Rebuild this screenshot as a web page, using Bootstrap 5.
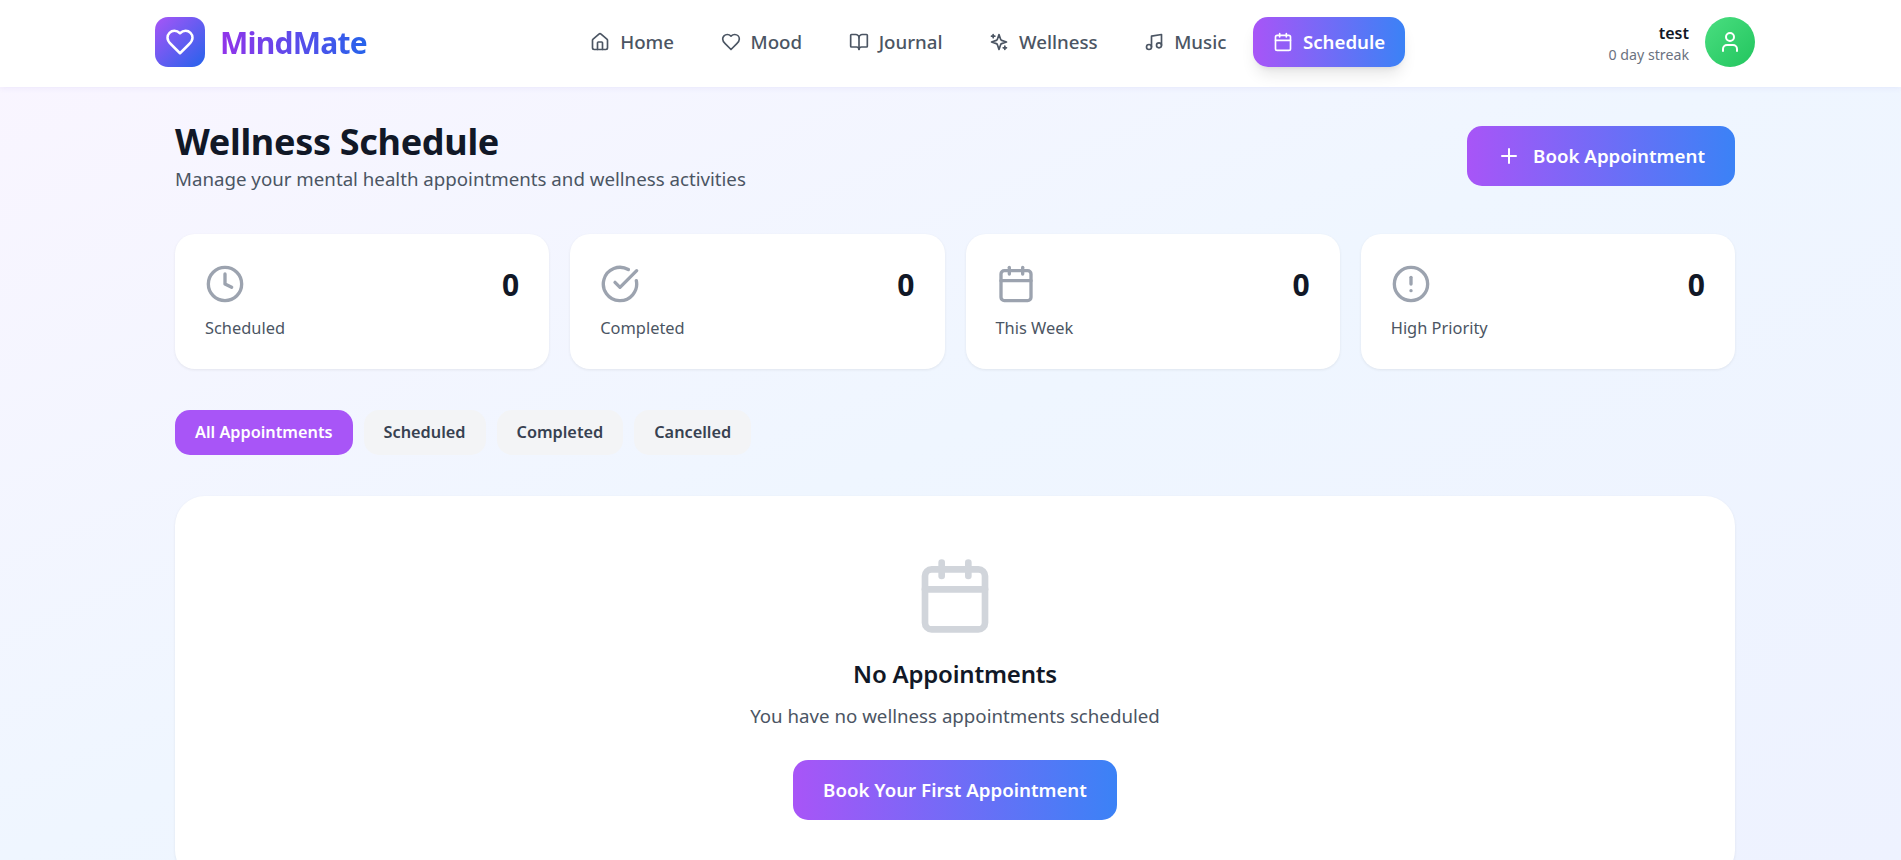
<!DOCTYPE html>
<html lang="en">
<head>
  <meta charset="UTF-8" />
  <meta name="viewport" content="width=device-width, initial-scale=1" />
  <title>MindMate - Wellness Schedule</title>
  <link href="https://cdn.jsdelivr.net/npm/bootstrap@5.3.0/dist/css/bootstrap.min.css" rel="stylesheet" />
  <style>
    html, body { height: 100%; overflow: hidden; }
    body {
      font-family: "Noto Sans", "Open Sans", sans-serif;
      background: linear-gradient(to bottom right, #faf5ff, #eff6ff, #eef2ff);
      color: #111827;
    }
    .ico { fill: none; stroke: currentColor; stroke-width: 2; stroke-linecap: round; stroke-linejoin: round; flex-shrink: 0; }
    .grad-btn { background: linear-gradient(90deg, #a855f7, #3b82f6); color: #fff; border: 0; }
    .grad-btn:hover { color: #fff; }

    .top-bar { height: 87px; background: #fff; box-shadow: 0 1px 6px rgba(88, 60, 200, .08); }
    .top-inner { width: 1600px; height: 84px; margin-left: 155px; }
    .logo-box { width: 50px; height: 50px; border-radius: 13px; background: linear-gradient(135deg, #a855f7, #2563eb); color: #fff; }
    .logo-text {
      font-size: 30px; font-weight: 700; letter-spacing: -.75px;
      background: linear-gradient(90deg, #9333ea, #2563eb);
      -webkit-background-clip: text; background-clip: text; color: transparent;
    }
    .logo-link { gap: 15px; }
    .menu-row { gap: 6.5px; }
    .menu-link { height: 50px; padding: 0 20px; gap: 10px; border-radius: 15px; font-size: 18.7px; font-weight: 500; color: #4b5563; text-decoration: none; }
    .menu-link.on { font-weight: 600; color: #fff; box-shadow: 0 10px 15px -3px rgba(0, 0, 0, .1), 0 4px 6px -4px rgba(0, 0, 0, .1); }
    .user-info { padding-top: 2px; }
    .user-name { font-size: 16px; font-weight: 600; line-height: 24px; }
    .user-streak { font-size: 14.2px; color: #6b7280; line-height: 20px; }
    .avatar { width: 50px; height: 50px; border-radius: 50%; background: linear-gradient(135deg, #4ade80, #22c55e); color: #fff; }

    .page-wrap { width: 1560px; margin-left: 175px; padding-top: 39px; }
    .page-title { font-size: 36px; font-weight: 700; line-height: 32px; letter-spacing: -.3px; margin: 0; }
    .page-sub { font-size: 18.7px; line-height: 28px; color: #4b5563; margin: 7px 0 0; }
    .big-btn { height: 60px; padding: 0 30px; border-radius: 15px; font-size: 18.7px; font-weight: 600; }
    .big-btn .ico { margin-right: 4px; }

    .stat-grid { display: grid; grid-template-columns: repeat(4, 1fr); gap: 21px; margin-top: 41px; }
    .stat-box { height: 135px; padding: 29px 30px; background: #fff; border-radius: 20px; box-shadow: 0 1px 3px rgba(0, 0, 0, .07); }
    .stat-num { font-size: 30px; font-weight: 700; line-height: 40px; padding-top: 2px; }
    .stat-label { margin-top: 11px; font-size: 16.4px; line-height: 24px; color: #4b5563; }
    .stat-ico { color: #9ca3af; }

    .tab-row { gap: 11px; margin-top: 41px; }
    .tab-btn { height: 45px; padding: 0 20px; border: 0; border-radius: 15px; font-size: 16.3px; font-weight: 600; background: #f3f4f6; color: #374151; }
    .tab-btn.on { background: #a855f7; color: #fff; }

    .empty-box { margin-top: 41px; padding: 60px; background: #fff; border-radius: 30px; box-shadow: 0 1px 3px rgba(0, 0, 0, .07); }
    .empty-ico { color: #d1d5db; }
    .empty-title { font-size: 24px; font-weight: 600; line-height: 32px; letter-spacing: -.2px; margin: 22px 0 0; }
    .empty-sub { font-size: 18.7px; line-height: 28px; color: #4b5563; margin: 12px 0 0; }
    .empty-box .big-btn { margin-top: 30px; }
  </style>
</head>
<body>
  <svg width="0" height="0" class="position-absolute">
    <symbol id="i-home" viewBox="0 0 24 24"><path d="M15 21v-8a1 1 0 0 0-1-1h-4a1 1 0 0 0-1 1v8"/><path d="M3 10a2 2 0 0 1 .709-1.528l7-5.999a2 2 0 0 1 2.582 0l7 5.999A2 2 0 0 1 21 10v9a2 2 0 0 1-2 2H5a2 2 0 0 1-2-2z"/></symbol>
    <symbol id="i-heart" viewBox="0 0 24 24"><path d="M19 14c1.49-1.46 3-3.21 3-5.5A5.5 5.5 0 0 0 16.5 3c-1.76 0-3 .5-4.5 2-1.5-1.5-2.74-2-4.5-2A5.5 5.5 0 0 0 2 8.5c0 2.3 1.5 4.05 3 5.5l7 7Z"/></symbol>
    <symbol id="i-book" viewBox="0 0 24 24"><path d="M12 7v14"/><path d="M3 18a1 1 0 0 1-1-1V4a1 1 0 0 1 1-1h5a4 4 0 0 1 4 4 4 4 0 0 1 4-4h5a1 1 0 0 1 1 1v13a1 1 0 0 1-1 1h-6a3 3 0 0 0-3 3 3 3 0 0 0-3-3z"/></symbol>
    <symbol id="i-spark" viewBox="0 0 24 24"><path d="m12 3-1.912 5.813a2 2 0 0 1-1.275 1.275L3 12l5.813 1.912a2 2 0 0 1 1.275 1.275L12 21l1.912-5.813a2 2 0 0 1 1.275-1.275L21 12l-5.813-1.912a2 2 0 0 1-1.275-1.275L12 3Z"/><path d="M5 3v4"/><path d="M19 17v4"/><path d="M3 5h4"/><path d="M17 19h4"/></symbol>
    <symbol id="i-music" viewBox="0 0 24 24"><path d="M9 18V5l12-2v13"/><circle cx="6" cy="18" r="3"/><circle cx="18" cy="16" r="3"/></symbol>
    <symbol id="i-cal" viewBox="0 0 24 24"><path d="M8 2v4"/><path d="M16 2v4"/><rect x="3" y="4" width="18" height="18" rx="2"/><path d="M3 10h18"/></symbol>
    <symbol id="i-user" viewBox="0 0 24 24"><path d="M19 21v-2a4 4 0 0 0-4-4H9a4 4 0 0 0-4 4v2"/><circle cx="12" cy="7" r="4"/></symbol>
    <symbol id="i-plus" viewBox="0 0 24 24"><path d="M5 12h14"/><path d="M12 5v14"/></symbol>
    <symbol id="i-clock" viewBox="0 0 24 24"><circle cx="12" cy="12" r="10"/><polyline points="12 6 12 12 16 14"/></symbol>
    <symbol id="i-check" viewBox="0 0 24 24"><path d="M21.801 10A10 10 0 1 1 17 3.335"/><path d="m9 11 3 3L22 4"/></symbol>
    <symbol id="i-alert" viewBox="0 0 24 24"><circle cx="12" cy="12" r="10"/><line x1="12" x2="12" y1="8" y2="12"/><line x1="12" x2="12.01" y1="16" y2="16"/></symbol>
  </svg>

  <nav class="top-bar">
    <div class="top-inner d-flex align-items-center justify-content-between">
      <a href="#" class="logo-link d-flex align-items-center text-decoration-none">
        <span class="logo-box d-flex align-items-center justify-content-center">
          <svg class="ico" width="30" height="30"><use href="#i-heart"/></svg>
        </span>
        <span class="logo-text">MindMate</span>
      </a>

      <div class="menu-row d-flex align-items-center">
        <a href="#" class="menu-link d-flex align-items-center"><svg class="ico" width="20" height="20"><use href="#i-home"/></svg>Home</a>
        <a href="#" class="menu-link d-flex align-items-center"><svg class="ico" width="20" height="20"><use href="#i-heart"/></svg>Mood</a>
        <a href="#" class="menu-link d-flex align-items-center"><svg class="ico" width="20" height="20"><use href="#i-book"/></svg>Journal</a>
        <a href="#" class="menu-link d-flex align-items-center"><svg class="ico" width="20" height="20"><use href="#i-spark"/></svg>Wellness</a>
        <a href="#" class="menu-link d-flex align-items-center"><svg class="ico" width="20" height="20"><use href="#i-music"/></svg>Music</a>
        <a href="#" class="menu-link on grad-btn d-flex align-items-center"><svg class="ico" width="20" height="20"><use href="#i-cal"/></svg>Schedule</a>
      </div>

      <div class="d-flex align-items-center gap-3">
        <div class="user-info text-end">
          <div class="user-name">test</div>
          <div class="user-streak">0 day streak</div>
        </div>
        <div class="avatar d-flex align-items-center justify-content-center">
          <svg class="ico" width="24" height="24"><use href="#i-user"/></svg>
        </div>
      </div>
    </div>
  </nav>

  <main class="page-wrap">
    <div class="d-flex align-items-start justify-content-between">
      <div>
        <h1 class="page-title">Wellness Schedule</h1>
        <p class="page-sub">Manage your mental health appointments and wellness activities</p>
      </div>
      <button class="btn big-btn grad-btn d-flex align-items-center gap-2">
        <svg class="ico" width="24" height="24"><use href="#i-plus"/></svg>
        Book Appointment
      </button>
    </div>

    <div class="stat-grid">
      <div class="stat-box">
        <div class="d-flex align-items-center justify-content-between">
          <svg class="ico stat-ico" width="40" height="40"><use href="#i-clock"/></svg>
          <span class="stat-num">0</span>
        </div>
        <div class="stat-label">Scheduled</div>
      </div>
      <div class="stat-box">
        <div class="d-flex align-items-center justify-content-between">
          <svg class="ico stat-ico" width="40" height="40"><use href="#i-check"/></svg>
          <span class="stat-num">0</span>
        </div>
        <div class="stat-label">Completed</div>
      </div>
      <div class="stat-box">
        <div class="d-flex align-items-center justify-content-between">
          <svg class="ico stat-ico" width="40" height="40"><use href="#i-cal"/></svg>
          <span class="stat-num">0</span>
        </div>
        <div class="stat-label">This Week</div>
      </div>
      <div class="stat-box">
        <div class="d-flex align-items-center justify-content-between">
          <svg class="ico stat-ico" width="40" height="40"><use href="#i-alert"/></svg>
          <span class="stat-num">0</span>
        </div>
        <div class="stat-label">High Priority</div>
      </div>
    </div>

    <div class="tab-row d-flex">
      <button class="tab-btn on">All Appointments</button>
      <button class="tab-btn">Scheduled</button>
      <button class="tab-btn">Completed</button>
      <button class="tab-btn">Cancelled</button>
    </div>

    <div class="empty-box d-flex flex-column align-items-center text-center">
      <svg class="ico empty-ico" width="80" height="80"><use href="#i-cal"/></svg>
      <h3 class="empty-title">No Appointments</h3>
      <p class="empty-sub">You have no wellness appointments scheduled</p>
      <button class="btn big-btn grad-btn">Book Your First Appointment</button>
    </div>
  </main>

  <script src="https://cdn.jsdelivr.net/npm/bootstrap@5.3.0/dist/js/bootstrap.bundle.min.js"></script>
</body>
</html>
